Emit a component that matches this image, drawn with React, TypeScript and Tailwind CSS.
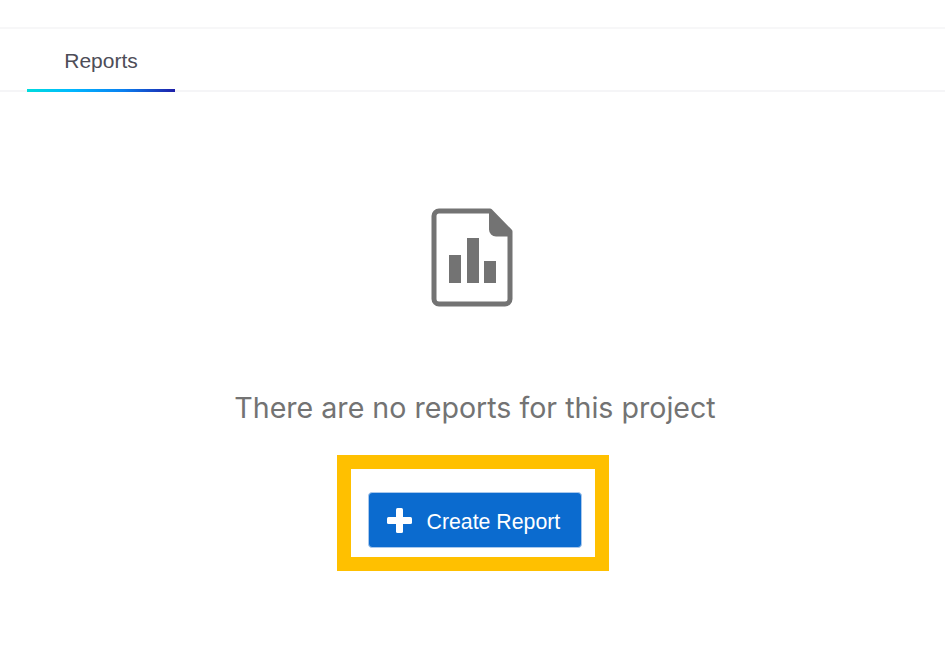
export default function App() {
  return (
    <div className="w-[945px] h-[669px] bg-white overflow-hidden font-['Inter',sans-serif]">
      <div className="h-[29px] border-b-2 border-[#f7f7f8]" />
      <div className="h-[63px] border-b-2 border-[#f5f5f7] pl-[27px]">
        <div className="relative w-[148px] h-[62px] flex items-center justify-center pt-px">
          <span className="text-[21px] text-[#4d4d57] font-['Liberation_Sans',sans-serif]">Reports</span>
          <div className="absolute left-0 right-0 bottom-[-1px] h-[3px] bg-[linear-gradient(90deg,#00dcdc_0%,#00b8ff_30%,#0a80f0_65%,#1f1fa8_100%)]" />
        </div>
      </div>
      <div className="flex flex-col items-center">
        <svg className="mt-[116px] block" width="84" height="101" viewBox="0 0 84 101" fill="none">
          <path d="M8 3H59L79 23.5V91A5 5 0 0 1 74 96H8A5 5 0 0 1 3 91V8A5 5 0 0 1 8 3Z" stroke="#737373" strokeWidth="5" strokeLinejoin="round" />
          <path d="M58 2L81 25.5V28.5H65A7 7 0 0 1 58 21.5Z" fill="#737373" />
          <rect x="18" y="47" width="12" height="28" fill="#737373" />
          <rect x="36" y="30" width="12" height="45" fill="#737373" />
          <rect x="53" y="53" width="12" height="22" fill="#737373" />
        </svg>
        <p className="mt-[80px] text-[28.6px] leading-[38px] text-[#737373] ml-[5px]">There are no reports for this project</p>
        <div className="mt-[28px] w-[272px] h-[116px] border-[14px] border-[#ffc000] flex items-center justify-center">
          <button className="w-[214px] h-[56px] rounded-[4px] bg-[#0b6bcf] border border-[#a9c8ec] flex items-center gap-[15px] pl-[18px] text-white text-[21.3px] font-['Liberation_Sans',sans-serif] mt-[14px] ml-[4px]">
            <svg width="25" height="25" viewBox="0 0 25 25" fill="#fff">
              <rect x="9" y="0" width="7" height="25" rx="1.5" />
              <rect x="0" y="9" width="25" height="7" rx="1.5" />
            </svg>
            <span className="pt-[5px]">Create Report</span>
          </button>
        </div>
      </div>
    </div>
  );
}
